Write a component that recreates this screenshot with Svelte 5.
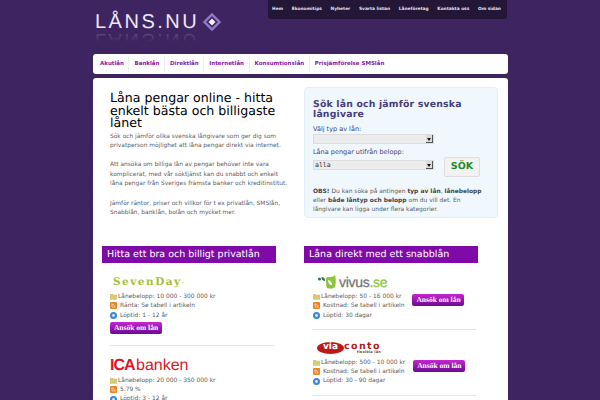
<script>
  const nav = ['Hem', 'Ekonomitips', 'Nyheter', 'Svarta listan', 'Låneföretag', 'Kontakta oss', 'Om sidan'];
  const menu = ['Akutlån', 'Banklån', 'Direktlån', 'Internetlån', 'Konsumtionslån', 'Prisjämförelse SMSlån'];
</script>

<div class="page">
  <header class="top">
    <div class="logo">
      <div class="brand">LÅNS.NU</div>
      <svg class="mark" width="18" height="18" viewBox="0 0 18 18">
        <path d="M9 1.500 L16.500 9 L9 16.500 L1.500 9 Z" fill="none" stroke="#8f7cc4" stroke-width="2.400" />
        <path d="M9 5.500 L12.500 9 L9 12.500 L5.500 9 Z" fill="#f4f0fa" />
      </svg>
      <div class="brand reflect" aria-hidden="true">LÅNS.NU</div>
    </div>
    <nav class="topnav">
      {#each nav as item}<span>{item}</span>{/each}
    </nav>
  </header>

  <nav class="menu">
    {#each menu as item}<span>{item}</span>{/each}
  </nav>

  <main class="content">
    <section class="intro">
      <div class="text">
        <h1>Låna pengar online - hitta enkelt bästa och billigaste lånet</h1>
        <p>Sök och jämför olika svenska långivare som ger dig som privatperson möjlighet att låna pengar direkt via internet.</p>
        <p>Att ansöka om billiga lån av pengar behöver inte vara komplicerat, med vår söktjänst kan du snabbt och enkelt låna pengar från Sveriges främsta banker och kreditinstitut.</p>
        <p>Jämför räntor, priser och villkor för t ex privatlån, SMSlån, Snabblån, banklån, bolån och mycket mer.</p>
      </div>
      <form class="search">
        <h2>Sök lån och jämför svenska långivare</h2>
        <label for="typ">Välj typ av lån:</label>
        <div class="selectrow first"><div class="select" id="typ"><span></span><b></b></div></div>
        <label for="belopp">Låna pengar utifrån belopp:</label>
        <div class="selectrow">
          <div class="select" id="belopp"><span>alla</span><b></b></div>
          <div class="sok">SÖK</div>
        </div>
        <p><strong>OBS!</strong> Du kan söka på antingen <strong>typ av lån</strong>, <strong>lånebelopp</strong> eller <strong>både låntyp och belopp</strong> om du vill det. En långivare kan ligga under flera kategorier.</p>
      </form>
    </section>

    <section class="columns">
      <div class="col">
        <h3>Hitta ett bra och billigt privatlån</h3>
        <div class="offer">
          <div class="brandlogo seven">SevenDay<small>.</small></div>
          {@render facts('Lånebelopp: 10 000 - 300 000 kr', 'Ränta: Se tabell i artikeln', 'Löptid: 1 - 12 år')}
          <div class="apply">Ansök om lån</div>
        </div>
        <hr class="long" />
        <div class="offer">
          <div class="brandlogo ica"><b>ICA</b> banken</div>
          {@render facts('Lånebelopp: 20 000 - 350 000 kr', '5.79 %', 'Löptid: 3 - 12 år')}
        </div>
      </div>
      <div class="col right">
        <h3>Låna direkt med ett snabblån</h3>
        <div class="offer">
          <div class="brandlogo vivus">
            <svg width="18" height="14" viewBox="0 0 18 14">
              <circle cx="1.500" cy="4" r="1.500" fill="#2f6f4a" />
              <path d="M3.500 2 C6 2 7 3.500 7 6 C5 6 3.500 4.500 3.500 2 Z" fill="#2f6f4a" />
              <path d="M8 3 C8 4 8 12 9 13 C11 14 16 14 17 12 C18 9 18 3 17 0 C14 3 10 1 8 3 Z" fill="#8cc63f" />
              <path d="M10 5 C12 5 14 7 14 10 C11.500 10 10 8 10 5 Z" fill="#fff" />
            </svg>
            <span>vivus<i>.se</i></span>
          </div>
          <div class="factrow">
            {@render facts('Lånebelopp: 50 - 16 000 kr', 'Kostnad: Se tabell i artikeln', 'Löptid: 30 dagar')}
            <div class="apply">Ansök om lån</div>
          </div>
        </div>
        <hr />
        <div class="offer">
          <div class="brandlogo via">
            <span class="pill">via</span><span class="conto">conto<small>flexibla lån</small></span>
          </div>
          <div class="factrow">
            {@render facts('Lånebelopp: 500 - 10 000 kr', 'Kostnad: Se tabell i artikeln', 'Löptid: 30 - 90 dagar')}
            <div class="apply">Ansök om lån</div>
          </div>
        </div>
        <hr />
      </div>
    </section>
  </main>
</div>

{#snippet facts(a, b, c)}
  <ul class="facts">
    <li>
      <svg viewBox="0 0 10 9"><path d="M0 1h4l1 1h5v7H0z" fill="#d8c878" /></svg>
      <span class="tight">{a}</span>
    </li>
    <li>
      <svg viewBox="0 0 10 10"><rect width="10" height="10" rx="1.500" fill="#e8862a" /><path d="M2 3c3 0 5 2 5 5M2 5.500c1.500 0 2.500 1 2.500 2.500" stroke="#fff" fill="none" /></svg>
      <span>{b}</span>
    </li>
    <li>
      <svg viewBox="0 0 10 10"><circle cx="5" cy="5" r="5" fill="#3f86d8" /><circle cx="5" cy="5" r="2" fill="#dcebfa" /></svg>
      <span>{c}</span>
    </li>
  </ul>
{/snippet}

<style>
  :global(body) {
    margin: 0;
    background: #3e2562;
  }
  .page {
    width: 416px;
    height: 400px;
    margin-left: 92px;
    overflow: hidden;
    font-family: "DejaVu Sans", sans-serif;
    text-rendering: geometricPrecision;
  }
  .top {
    display: flex;
    justify-content: space-between;
    height: 54px;
  }
  .logo {
    position: relative;
    display: flex;
    align-items: flex-start;
    gap: 4px;
    padding: 11px 0 0 3px;
  }
  .brand {
    font-family: "Liberation Sans", sans-serif;
    font-size: 20px;
    line-height: 22px;
    letter-spacing: 2.500px;
    color: #ece8f4;
    white-space: nowrap;
  }
  .mark {
    margin-top: 2px;
  }
  .brand.reflect {
    position: absolute;
    left: 3px;
    top: 29px;
    transform: scaleY(-1);
    opacity: .25;
    -webkit-mask-image: linear-gradient(to top, #000, transparent 60%);
    mask-image: linear-gradient(to top, #000, transparent 60%);
  }
  .topnav {
    display: flex;
    align-items: center;
    gap: 8.700px;
    height: 19px;
    width: 239px;
    box-sizing: border-box;
    padding-left: 4px;
    background: #241636;
    border-radius: 0 0 3px 3px;
    margin-right: 1px;
    font-size: 4.350px;
    font-weight: bold;
    color: #e6e2ec;
    white-space: nowrap;
  }
  .menu {
    display: flex;
    align-items: center;
    height: 20px;
    margin: 0 0 4px 1px;
    padding: 0 2px;
    background: #fff;
    border-radius: 3px;
    font-size: 5.500px;
    font-weight: bold;
    color: #8a18a8;
    white-space: nowrap;
  }
  .menu span {
    padding: 0 4.500px 0 5px;
    line-height: 16px;
    border-right: 1px solid #eee;
  }
  .menu span:last-child {
    border: 0;
  }
  .content {
    margin-left: 1px;
    height: 322px;
    background: #fff;
    border-radius: 3px 3px 0 0;
    overflow: hidden;
  }
  .intro {
    display: flex;
    justify-content: space-between;
    height: 154px;
    padding: 14px 0 0 17px;
  }
  .text {
    width: 178px;
  }
  h1 {
    margin: 0 0 3px;
    font-size: 12.600px;
    line-height: 12.500px;
    font-weight: normal;
    color: #000;
  }
  .text p {
    margin: 0 0 9.600px;
    font-size: 5.900px;
    line-height: 9.600px;
    color: #606060;
  }
  .search {
    width: 194px;
    height: 131px;
    margin: -5px 10px 0 0;
    padding: 12px 8px 0 8px;
    box-sizing: border-box;
    background: #f0f7fd;
    border: 1px solid #e4eef7;
    border-radius: 4px;
  }
  h2 {
    margin: 0 0 4px;
    font-size: 9.300px;
    line-height: 10px;
    letter-spacing: .2px;
    color: #46407c;
  }
  label {
    display: block;
    font-size: 6.500px;
    line-height: 10px;
    color: #46407c;
  }
  .selectrow {
    display: flex;
    align-items: flex-start;
    height: 10px;
    margin-top: 3px;
  }
  .selectrow.first {
    margin: 0 0 3px;
  }
  .select {
    display: flex;
    justify-content: space-between;
    align-items: stretch;
    width: 121px;
    height: 10px;
    box-sizing: border-box;
    background: #ececec;
    border: 1px solid #ddd;
    font-family: "DejaVu Sans Mono", monospace;
    font-size: 6.500px;
    line-height: 8px;
    color: #333;
    padding-left: 1px;
  }
  .select b {
    position: relative;
    width: 7px;
    background: #ddd;
    border: 1px solid #555;
    border-width: 0 1px 1px 0;
    box-sizing: border-box;
  }
  .select b::after {
    content: "";
    position: absolute;
    left: 1px;
    top: 3px;
    border: 2px solid transparent;
    border-top: 3px solid #111;
    border-bottom: 0;
  }
  .sok {
    flex: none;
    width: 36px;
    height: 20px;
    margin: -3px 0 0 10px;
    box-sizing: border-box;
    background: #f2f2f2;
    border: 1px solid #ddd;
    border-radius: 2px;
    color: #1f8a2c;
    font-size: 9.500px;
    font-weight: bold;
    line-height: 18px;
    text-align: center;
  }
  .search p {
    margin: 16.500px 0 0;
    font-size: 5.950px;
    line-height: 9.300px;
    color: #606060;
  }
  .search p strong {
    color: #444;
  }
  .columns {
    display: flex;
    padding-left: 9px;
    gap: 28px;
  }
  .col {
    width: 174px;
  }
  h3 {
    margin: 0 0 8px;
    height: 17px;
    padding-left: 5px;
    box-sizing: border-box;
    background: #7f0aa8;
    color: #fff;
    font-size: 9.500px;
    font-weight: normal;
    line-height: 17px;
    white-space: nowrap;
  }
  .offer {
    padding-left: 8px;
  }
  .right .offer {
    padding-left: 9px;
  }
  .brandlogo {
    display: flex;
    align-items: center;
    height: 21px;
    white-space: nowrap;
  }
  .seven {
    font-family: "DejaVu Serif", serif;
    font-weight: bold;
    font-size: 10.500px;
    letter-spacing: 1.500px;
    color: #a3bf3a;
    padding-left: 3px;
  }
  .seven small {
    font-size: 6px;
  }
  .ica {
    display: block;
    height: 20px;
    font-family: "Liberation Sans", sans-serif;
    font-size: 16px;
    line-height: 20px;
    word-spacing: -3px;
    color: #d9172a;
  }
  .ica b {
    font-size: 16px;
    letter-spacing: -1px;
  }
  .vivus {
    gap: 3px;
    padding-left: 5px;
  }
  .vivus span {
    font-family: "Liberation Sans", sans-serif;
    font-size: 14px;
    color: #777;
    -webkit-text-stroke: .3px #777;
    letter-spacing: -.3px;
  }
  .vivus i {
    font-style: normal;
    color: #8cc63f;
    -webkit-text-stroke: .3px #8cc63f;
  }
  .via {
    height: 19px;
    padding-left: 4px;
  }
  .pill {
    display: block;
    width: 27px;
    height: 12px;
    border-radius: 50%;
    background: #c01818;
    color: #fff;
    font-size: 9px;
    font-weight: bold;
    line-height: 11px;
    text-align: center;
  }
  .conto {
    display: block;
    font-size: 9.500px;
    font-weight: bold;
    line-height: 8px;
    letter-spacing: 1.400px;
    color: #b01c1c;
  }
  .conto small {
    display: block;
    font-size: 3.500px;
    line-height: 3px;
    letter-spacing: .2px;
    text-align: right;
    color: #555;
  }
  .factrow {
    display: flex;
    align-items: flex-start;
    gap: 8px;
  }
  .facts {
    list-style: none;
    margin: 0;
    padding: 0;
    font-size: 5.950px;
    line-height: 9.300px;
    color: #606060;
    white-space: nowrap;
  }
  .facts li {
    display: flex;
    align-items: center;
    gap: 3px;
  }
  .facts svg {
    flex: none;
    width: 7px;
    height: 7px;
  }
  .facts .tight {
    margin-left: -2px;
  }
  .apply {
    flex: none;
    width: 52px;
    height: 12px;
    margin-top: 2px;
    border-radius: 2px;
    background: linear-gradient(#c626d0, #6a0a96);
    color: #fff;
    font-family: "Liberation Serif", serif;
    font-size: 7.500px;
    font-weight: bold;
    line-height: 12px;
    text-align: center;
    white-space: nowrap;
  }
  hr {
    width: 164px;
    height: 1px;
    border: 0;
    margin: 9px 0 9px 8px;
    background: #e6e6e6;
  }
  hr.long {
    margin: 11px 0 10px 8px;
  }
</style>
